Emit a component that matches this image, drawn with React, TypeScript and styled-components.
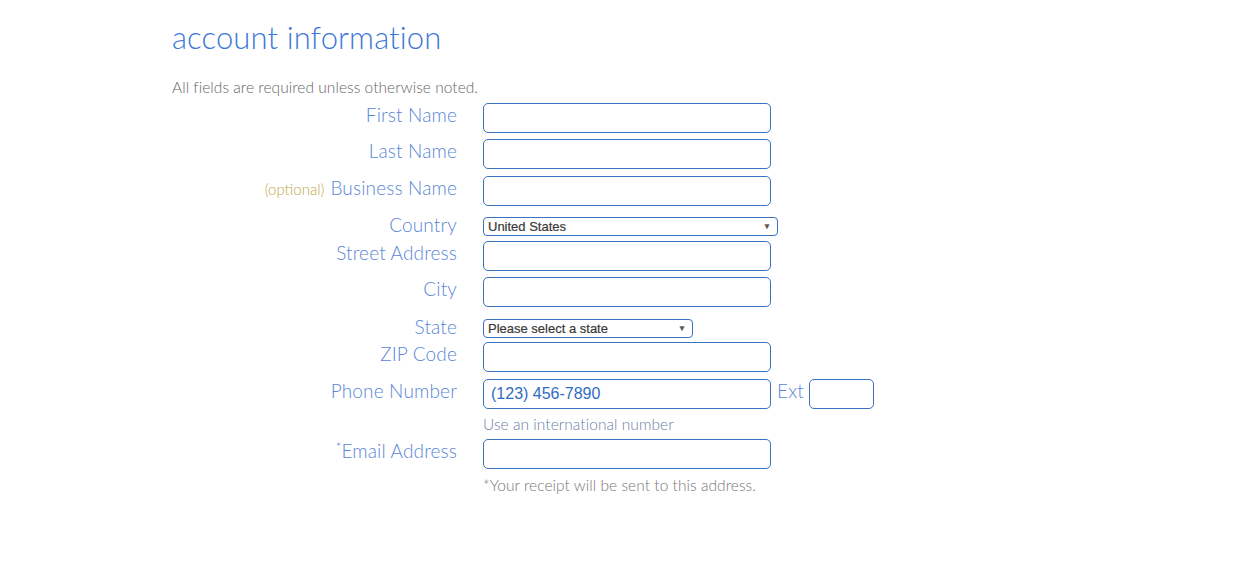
import React from "react";
import styled, { createGlobalStyle } from "styled-components";

const Global = createGlobalStyle`
  html, body { margin: 0; padding: 0; background: #fff; }
  body { font-family: Lato, "Open Sans", sans-serif; }
  * { box-sizing: border-box; }
`;

const Page = styled.div`
  width: 1253px;
  height: 561px;
  padding: 17px 0 0 172px;
  font-family: Lato, "Open Sans", sans-serif;
`;

const Title = styled.h1`
  margin: 0;
  font-weight: 300;
  font-size: 31px;
  line-height: 40px;
  color: #3d78d8;
  letter-spacing: 0.1px;
`;

const Note = styled.p`
  margin: 20px 0 0 0;
  font-weight: 300;
  font-size: 15.5px;
  line-height: 20px;
  letter-spacing: 0.05px;
  color: #666;
`;

const Form = styled.div`
  display: flex;
  flex-direction: column;
  margin-top: 6px;
`;

const Row = styled.div<{ $mt: number }>`
  display: grid;
  grid-template-columns: 285px auto;
  column-gap: 26px;
  align-items: start;
  margin-top: ${(p) => p.$mt}px;
`;

const Label = styled.label`
  text-align: right;
  font-weight: 300;
  font-size: 19px;
  line-height: 24px;
  letter-spacing: 0.15px;
  color: #5a86d6;
  white-space: nowrap;
`;

const Optional = styled.span`
  font-size: 15px;
  letter-spacing: 0;
  color: #c3a548;
  margin-right: 6px;
`;

const Star = styled.span`
  font-size: 13px;
  vertical-align: top;
  line-height: 16px;
`;

const Controls = styled.div`
  display: flex;
  align-items: flex-start;
`;

const Input = styled.input<{ $w?: number }>`
  width: ${(p) => p.$w ?? 288}px;
  height: 30px;
  border: 1px solid #3a72c0;
  border-radius: 5px;
  padding: 0 7px;
  font-family: "Liberation Sans", Arial, sans-serif;
  font-size: 16px;
  color: #2f6cc2;
  outline: none;
  background: #fff;
  &::placeholder { color: #2f6cc2; opacity: 1; }
`;

const SelectBox = styled.div<{ $w: number }>`
  position: relative;
  width: ${(p) => p.$w}px;
  height: 19px;
  margin-top: 4px;
  border: 1px solid #3a72c0;
  border-radius: 4px;
  padding: 0 18px 0 4px;
  font-family: "Liberation Sans", Arial, sans-serif;
  font-size: 13px;
  line-height: 17px;
  color: #3a3a3a;
  -webkit-text-stroke: 0.2px #3a3a3a;
`;

const Arrow = styled.span`
  position: absolute;
  right: 6px;
  top: 0;
  font-size: 8px;
  line-height: 17px;
  color: #555;
`;

const ExtLabel = styled.span`
  font-weight: 300;
  font-size: 19px;
  line-height: 24px;
  letter-spacing: 0.15px;
  color: #5a86d6;
  margin: 0 5px 0 6px;
`;

const Hint = styled.div<{ $color: string; $mt: number }>`
  margin: ${(p) => p.$mt}px 0 0 311px;
  font-weight: 300;
  font-size: 15.5px;
  line-height: 20px;
  letter-spacing: 0.05px;
  color: ${(p) => p.$color};
`;

function Select({ w, value }: { w: number; value: string }) {
  return (
    <SelectBox $w={w}>
      {value}
      <Arrow>▼</Arrow>
    </SelectBox>
  );
}

export default function App() {
  return (
    <>
      <Global />
      <Page>
        <Title>account information</Title>
        <Note>All fields are required unless otherwise noted.</Note>
        <Form>
          <Row $mt={0}>
            <Label>First Name</Label>
            <Input />
          </Row>
          <Row $mt={6}>
            <Label>Last Name</Label>
            <Input />
          </Row>
          <Row $mt={7}>
            <Label>
              <Optional>(optional)</Optional>Business Name
            </Label>
            <Input />
          </Row>
          <Row $mt={7}>
            <Label>Country</Label>
            <Select w={295} value="United States" />
          </Row>
          <Row $mt={4}>
            <Label>Street Address</Label>
            <Input />
          </Row>
          <Row $mt={6}>
            <Label>City</Label>
            <Input />
          </Row>
          <Row $mt={8}>
            <Label>State</Label>
            <Select w={210} value="Please select a state" />
          </Row>
          <Row $mt={3}>
            <Label>ZIP Code</Label>
            <Input />
          </Row>
          <Row $mt={7}>
            <Label>Phone Number</Label>
            <Controls>
              <Input placeholder="(123) 456-7890" />
              <ExtLabel>Ext</ExtLabel>
              <Input $w={65} />
            </Controls>
          </Row>
          <Hint $color="#6d7fa6" $mt={5}>Use an international number</Hint>
          <Row $mt={5}>
            <Label>
              <Star>*</Star>Email Address
            </Label>
            <Input />
          </Row>
          <Hint $color="#777" $mt={6}>*Your receipt will be sent to this address.</Hint>
        </Form>
      </Page>
    </>
  );
}
